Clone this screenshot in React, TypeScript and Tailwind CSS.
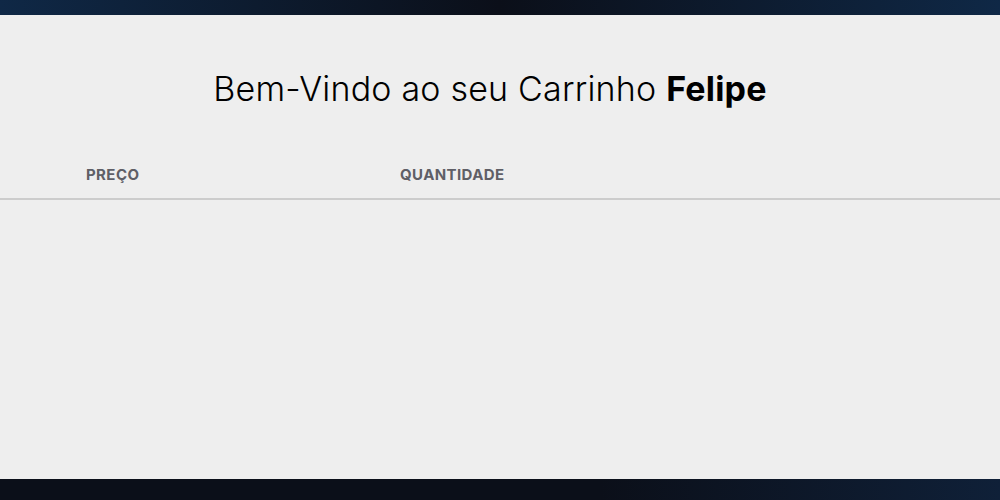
import React from 'react';

const columns = ['Preço', 'Quantidade'];

export default function App() {
  return (
    <div className="flex h-[500px] w-full flex-col bg-[#eeeeee] font-['Inter',sans-serif]">
      <div className="h-[15px] w-full bg-[linear-gradient(90deg,#0f2846_0%,#0b0f19_50%,#0f2846_100%)]" />

      <main className="flex-1">
        <h1 className="pt-[50px] pr-[20px] text-center text-[34px] font-light leading-[48px] tracking-[0.2px] text-black">
          Bem-Vindo ao seu Carrinho <span className="font-bold">Felipe</span>
        </h1>

        <div className="mt-[43px] border-b-2 border-[#cccccc]">
          <div className="flex h-[42px] items-center pb-[4px] text-[15px] font-bold uppercase tracking-[0.4px] text-[#5f5f66]">
            <div className="w-[400px] pl-[86px]">{columns[0]}</div>
            <div>{columns[1]}</div>
          </div>
        </div>
      </main>

      <div className="h-[21px] w-full bg-[linear-gradient(90deg,#0b0f19_0%,#0b0f19_60%,#0f2038_100%)]" />
    </div>
  );
}
